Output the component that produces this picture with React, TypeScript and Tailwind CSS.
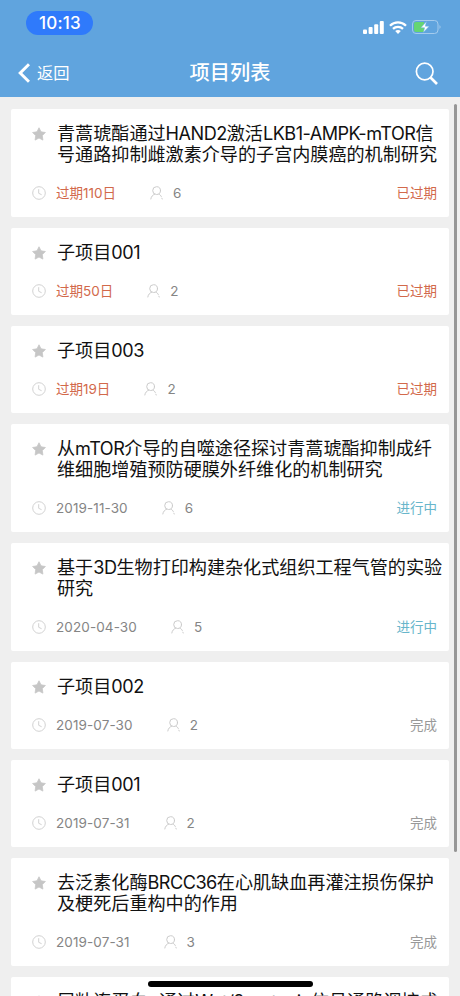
import { Fragment } from "react";

type Status = "overdue" | "active" | "done";

interface Project {
  id: number;
  title: string[];
  due: string;
  members: number;
  status: Status;
}

const projects: Project[] = [
  { id: 1, title: ["青蒿琥酯通过HAND2激活LKB1-AMPK-mTOR信", "号通路抑制雌激素介导的子宫内膜癌的机制研究"], due: "过期110日", members: 6, status: "overdue" },
  { id: 2, title: ["子项目001"], due: "过期50日", members: 2, status: "overdue" },
  { id: 3, title: ["子项目003"], due: "过期19日", members: 2, status: "overdue" },
  { id: 4, title: ["从mTOR介导的自噬途径探讨青蒿琥酯抑制成纤", "维细胞增殖预防硬膜外纤维化的机制研究"], due: "2019-11-30", members: 6, status: "active" },
  { id: 5, title: ["基于3D生物打印构建杂化式组织工程气管的实验", "研究"], due: "2020-04-30", members: 5, status: "active" },
  { id: 6, title: ["子项目002"], due: "2019-07-30", members: 2, status: "done" },
  { id: 7, title: ["子项目001"], due: "2019-07-31", members: 2, status: "done" },
  { id: 8, title: ["去泛素化酶BRCC36在心肌缺血再灌注损伤保护", "及梗死后重构中的作用"], due: "2019-07-31", members: 3, status: "done" },
  { id: 9, title: ["层粘连蛋白α通过Wnt/β-catenin信号通路调控成"], due: "2019-07-31", members: 3, status: "done" },
];

const statusLabels: Record<Status, string> = {
  overdue: "已过期",
  active: "进行中",
  done: "完成",
};

const statusColors: Record<Status, string> = {
  overdue: "text-[#d2694b]",
  active: "text-[#68b6cb]",
  done: "text-[#999999]",
};

/* ─── Icons ─── */
function StarIcon() {
  return (
    <svg viewBox="0 0 14 14" className="w-3.5 h-3.5 shrink-0" fill="#c6c6c6" stroke="#c6c6c6" strokeWidth="0.8" strokeLinejoin="round">
      <path d="M7 .8 9 4.8 13.4 5.5 10.3 8.6 10.9 13.1 7 11 3.1 13.1 3.7 8.6.6 5.5 5 4.8Z" />
    </svg>
  );
}

function ClockIcon() {
  return (
    <svg viewBox="0 0 14 14" className="w-3.5 h-3.5 shrink-0" fill="none" stroke="#d2d2d2" strokeWidth="1">
      <circle cx="7" cy="7" r="6.3" />
      <path d="M6.7 3.2V7.3L9.6 8.7" />
    </svg>
  );
}

function MemberIcon() {
  return (
    <svg viewBox="0 0 13 14" className="w-[13px] h-3.5 shrink-0" fill="none" stroke="#cbcbcb" strokeWidth="1" strokeLinecap="round">
      <circle cx="6.6" cy="4.6" r="3.9" />
      <path d="M4.6 8.2C2.6 9 1.2 10.6.8 13M9 8.2C10.2 8.8 10.9 9.6 11.3 10.5M11.9 12.2 12.2 13" />
    </svg>
  );
}

function SignalIcon() {
  return (
    <svg viewBox="0 0 21 13" className="w-[21px] h-[13px]" fill="white">
      <rect x="0" y="8.5" width="4" height="4.5" rx="1" />
      <rect x="5.6" y="6" width="4" height="7" rx="1" />
      <rect x="11.2" y="3.2" width="4" height="9.8" rx="1" />
      <rect x="16.8" y="0" width="4" height="13" rx="1" />
    </svg>
  );
}

function WifiIcon() {
  return (
    <svg viewBox="0 0 18 13" className="w-[18px] h-[13px]" fill="none" stroke="white" strokeWidth="2.3">
      <path d="M1 4.7C5.5.2 12.5.2 17 4.7M4 7.9C6.8 5.2 11.2 5.2 14 7.9" />
      <path d="M6.2 10.1C7.8 8.7 10.2 8.7 11.8 10.1L9 13Z" fill="white" stroke="none" />
    </svg>
  );
}

function BatteryIcon() {
  return (
    <svg viewBox="0 0 29 14" className="w-[29px] h-3.5">
      <rect x=".5" y=".5" width="25.5" height="13" rx="3.5" fill="none" stroke="#a4cbed" />
      <path d="M4 2H12V12H4Q2 12 2 10V4Q2 2 4 2Z" fill="#65d573" />
      <path d="M27.5 5Q29.6 7 27.5 9Z" fill="#a4cbed" />
      <path d="M14.5 1.5 8.8 7.8H12.6L11.3 12.5 17.2 6.2H13.3Z" fill="white" stroke="#63aee0" strokeWidth=".5" />
    </svg>
  );
}

/* ─── Header ─── */
function Header() {
  return (
    <header className="h-[97px] shrink-0 bg-[#60a4de] text-white">
      <div className="h-12 flex items-start justify-between pl-[26px] pr-[19px] pt-[11px]">
        <span className="w-[67px] h-6 rounded-full bg-[#2f7afb] flex items-center justify-center pt-0.5 pl-px text-[17px] font-medium tracking-[0.2px]">
          10:13
        </span>
        <div className="flex items-center gap-[5px] pt-[9px]">
          <SignalIcon />
          <WifiIcon />
          <BatteryIcon />
        </div>
      </div>
      <div className="h-[49px] grid grid-cols-[1fr_auto_1fr] items-center pt-px pl-[18px] pr-[22px]">
        <button className="flex items-center gap-[7px] text-[16.3px] leading-none">
          <svg viewBox="0 0 12 20" className="w-3 h-5" fill="none" stroke="white" strokeWidth="3">
            <path d="M11 1.2 2.2 10 11 18.8" />
          </svg>
          <span className="pt-px">返回</span>
        </button>
        <h1 className="pt-px pl-1 text-[20.2px] leading-none font-medium">项目列表</h1>
        <button className="justify-self-end">
          <svg viewBox="0 0 23 23" className="w-[23px] h-[23px]" fill="none" stroke="white">
            <circle cx="9.7" cy="9.5" r="8.3" strokeWidth="1.7" />
            <path d="M15.5 15.5 22 22" strokeWidth="2.6" />
          </svg>
        </button>
      </div>
    </header>
  );
}

/* Latin runs are set a little tighter than the Chinese text around them */
function TitleLine({ text }: { text: string }) {
  return (
    <>
      {text.split(/([\w\-/αβ]+)/).map((part, i) =>
        i % 2 === 1 ? (
          <span key={i} className="tracking-[-0.5px]">{part}</span>
        ) : (
          <Fragment key={i}>{part}</Fragment>
        )
      )}
    </>
  );
}

/* ─── Project card ─── */
function ProjectCard({ project }: { project: Project }) {
  return (
    <li className="bg-white rounded-[2px] shrink-0 pt-[14px] pb-[15px] pl-[21px]">
      <div className="flex items-start gap-[11px]">
        <div className="pt-1">
          <StarIcon />
        </div>
        <h2 className="text-[18.1px] leading-[21px] text-[#111111] whitespace-nowrap">
          {project.title.map((line, i) => (
            <Fragment key={line}>
              {i > 0 && <br />}
              <TitleLine text={line} />
            </Fragment>
          ))}
        </h2>
      </div>
      <div className="mt-[19px] h-[18px] flex items-center pr-3 text-[13.5px] leading-[18px] text-[#858585]">
        <ClockIcon />
        <span className={`ml-2.5 ${project.status === "overdue" ? "text-[#d2694b]" : "text-[#858585] tracking-[0.1px]"}`}>
          {project.due}
        </span>
        <span className="ml-[34px] flex items-center gap-2.5">
          <MemberIcon />
          {project.members}
        </span>
        <span className={`ml-auto ${statusColors[project.status]}`}>{statusLabels[project.status]}</span>
      </div>
    </li>
  );
}

/* ─── Main component ─── */
export default function App() {
  return (
    <div className="relative w-[460px] h-[996px] overflow-hidden flex flex-col bg-[#efefef] font-[Inter,'Noto_Sans_CJK_SC',sans-serif]">
      <Header />
      <ul className="flex-1 min-h-0 overflow-hidden flex flex-col gap-[11px] pt-3 pl-[11px] pr-[11px]">
        {projects.map((project) => (
          <ProjectCard key={project.id} project={project} />
        ))}
      </ul>
      {/* Scroll thumb and home indicator float over the list */}
      <div className="absolute top-[104px] right-[3px] w-[3px] h-[748px] rounded-full bg-[#969696]" />
      <div className="absolute bottom-[9px] left-[148px] w-[165px] h-[6px] rounded-full bg-black" />
    </div>
  );
}
